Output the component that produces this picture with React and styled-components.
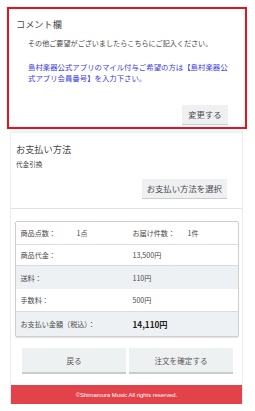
import React from "react";
import styled, { createGlobalStyle } from "styled-components";

const Global = createGlobalStyle`
  html, body { margin: 0; padding: 0; background: #ffffff; }
  body { font-family: "Noto Sans CJK JP", "Noto Sans", sans-serif; color: #444; }
  * { box-sizing: border-box; }
`;

const Page = styled.div`
  width: 255px;
  padding-top: 7px;
  display: flex;
  flex-direction: column;
`;

const CommentBox = styled.section`
  margin: 0 8px 0 7px;
  height: 122px;
  border: 2px solid #e8111d;
  padding: 9px 17px 0 7px;
  display: flex;
  flex-direction: column;
`;

const Title = styled.h2`
  margin: 0;
  font-size: 9.2px;
  line-height: 12px;
  font-weight: 400;
  color: #4a4a4a;
  white-space: nowrap;
`;

const Text = styled.p`
  margin: ${(p) => p.$mt}px 0 0 12px;
  font-size: ${(p) => p.$size}px;
  line-height: 11px;
  color: ${(p) => (p.$blue ? "#3c3ae2" : "#484848")};
  white-space: nowrap;
`;

const ButtonRow = styled.div`
  display: flex;
  justify-content: flex-end;
  margin-top: ${(p) => p.$mt}px;
`;

const SmallButton = styled.button`
  height: 20px;
  padding: 0 ${(p) => p.$px}px;
  border: none;
  border-bottom: 1px solid #c9cccd;
  background: #eef0f1;
  color: #4a4a4a;
  font-family: inherit;
  font-size: ${(p) => p.$size}px;
  line-height: 19px;
  white-space: nowrap;
`;

const Main = styled.div`
  margin: 2px 0 0 10px;
  width: 233px;
  border-left: 1px solid #ededed;
  border-right: 1px solid #ededed;
  border-top: 2px solid #f1f1f1;
  display: flex;
  flex-direction: column;
`;

const Payment = styled.section`
  padding: 10px 15px 9px 5px;
  display: flex;
  flex-direction: column;
`;

const PayMethod = styled.div`
  margin-top: 4px;
  font-size: 6.6px;
  line-height: 10px;
  color: #444;
`;

const Divider = styled.hr`
  margin: 0;
  border: none;
  border-top: 1px solid #e2e2e2;
`;

const Summary = styled.div`
  margin: 12px 3px 0 4px;
  border: 1px solid #cfcfcf;
  border-radius: 2px;
  box-shadow: 0 1px 1px rgba(0, 0, 0, 0.12);
  overflow: hidden;
`;

const Row = styled.div`
  display: grid;
  grid-template-columns: 56px 56px 55px 1fr;
  align-items: center;
  height: ${(p) => p.$h}px;
  padding-left: 4.5px;
  background: ${(p) => (p.$gray ? "#eef1f3" : "#ffffff")};
  border-top: ${(p) => (p.$line ? "1px solid #dcdcdc" : "none")};
  font-size: 7.1px;
  color: #4a4a4a;
  white-space: nowrap;
`;

const Cell = styled.span`
  grid-column: ${(p) => p.$col || "auto"};
  font-weight: ${(p) => (p.$bold ? 700 : 400)};
  font-size: ${(p) => (p.$bold ? "8.2px" : "inherit")};
  color: ${(p) => (p.$bold ? "#222" : "inherit")};
`;

const Actions = styled.div`
  display: flex;
  gap: 3px;
  margin: 11px 9px 0 11px;
`;

const BigButton = styled.button`
  flex: 1;
  height: 26px;
  border: none;
  border-bottom: 2px solid #c9cccd;
  background: #eef1f2;
  color: #5a5a5a;
  font-family: inherit;
  font-size: 7.6px;
  white-space: nowrap;
`;

const Footer = styled.footer`
  margin-top: 11px;
  height: 19px;
  background: #e2424a;
  color: #ffffff;
  font-family: "Liberation Sans", Arial, sans-serif;
  font-size: 5.9px;
  display: flex;
  align-items: center;
  justify-content: center;
`;

export default function App() {
  return (
    <Page>
      <Global />
      <CommentBox>
        <Title>コメント欄</Title>
        <Text $mt={7.5} $size={7.1}>その他ご要望がございましたらこちらにご記入ください。</Text>
        <Text $mt={12} $size={7.4} $blue>
          島村楽器公式アプリのマイル付与ご希望の方は【島村楽器公
          <br />
          式アプリ会員番号】を入力下さい。
        </Text>
        <ButtonRow $mt={22}>
          <SmallButton $px={6.5} $size={8.3}>変更する</SmallButton>
        </ButtonRow>
      </CommentBox>
      <Main>
        <Payment>
          <Title>お支払い方法</Title>
          <PayMethod>代金引換</PayMethod>
          <ButtonRow $mt={10}>
            <SmallButton $px={5} $size={8.4}>お支払い方法を選択</SmallButton>
          </ButtonRow>
        </Payment>
        <Divider />
        <Summary>
          <Row $h={22}>
            <Cell>商品点数：</Cell>
            <Cell>1点</Cell>
            <Cell>お届け件数：</Cell>
            <Cell>1件</Cell>
          </Row>
          <Row $h={21} $line>
            <Cell>商品代金：</Cell>
            <Cell $col="3">13,500円</Cell>
          </Row>
          <Row $h={24} $gray $line>
            <Cell>送料：</Cell>
            <Cell $col="3">110円</Cell>
          </Row>
          <Row $h={22}>
            <Cell>手数料：</Cell>
            <Cell $col="3">500円</Cell>
          </Row>
          <Row $h={25} $gray $line>
            <Cell $col="1 / 3">お支払い金額（税込）：</Cell>
            <Cell $col="3" $bold>14,110円</Cell>
          </Row>
        </Summary>
        <Actions>
          <BigButton>戻る</BigButton>
          <BigButton>注文を確定する</BigButton>
        </Actions>
        <Footer>©Shimamura Music All rights reserved.</Footer>
      </Main>
    </Page>
  );
}
